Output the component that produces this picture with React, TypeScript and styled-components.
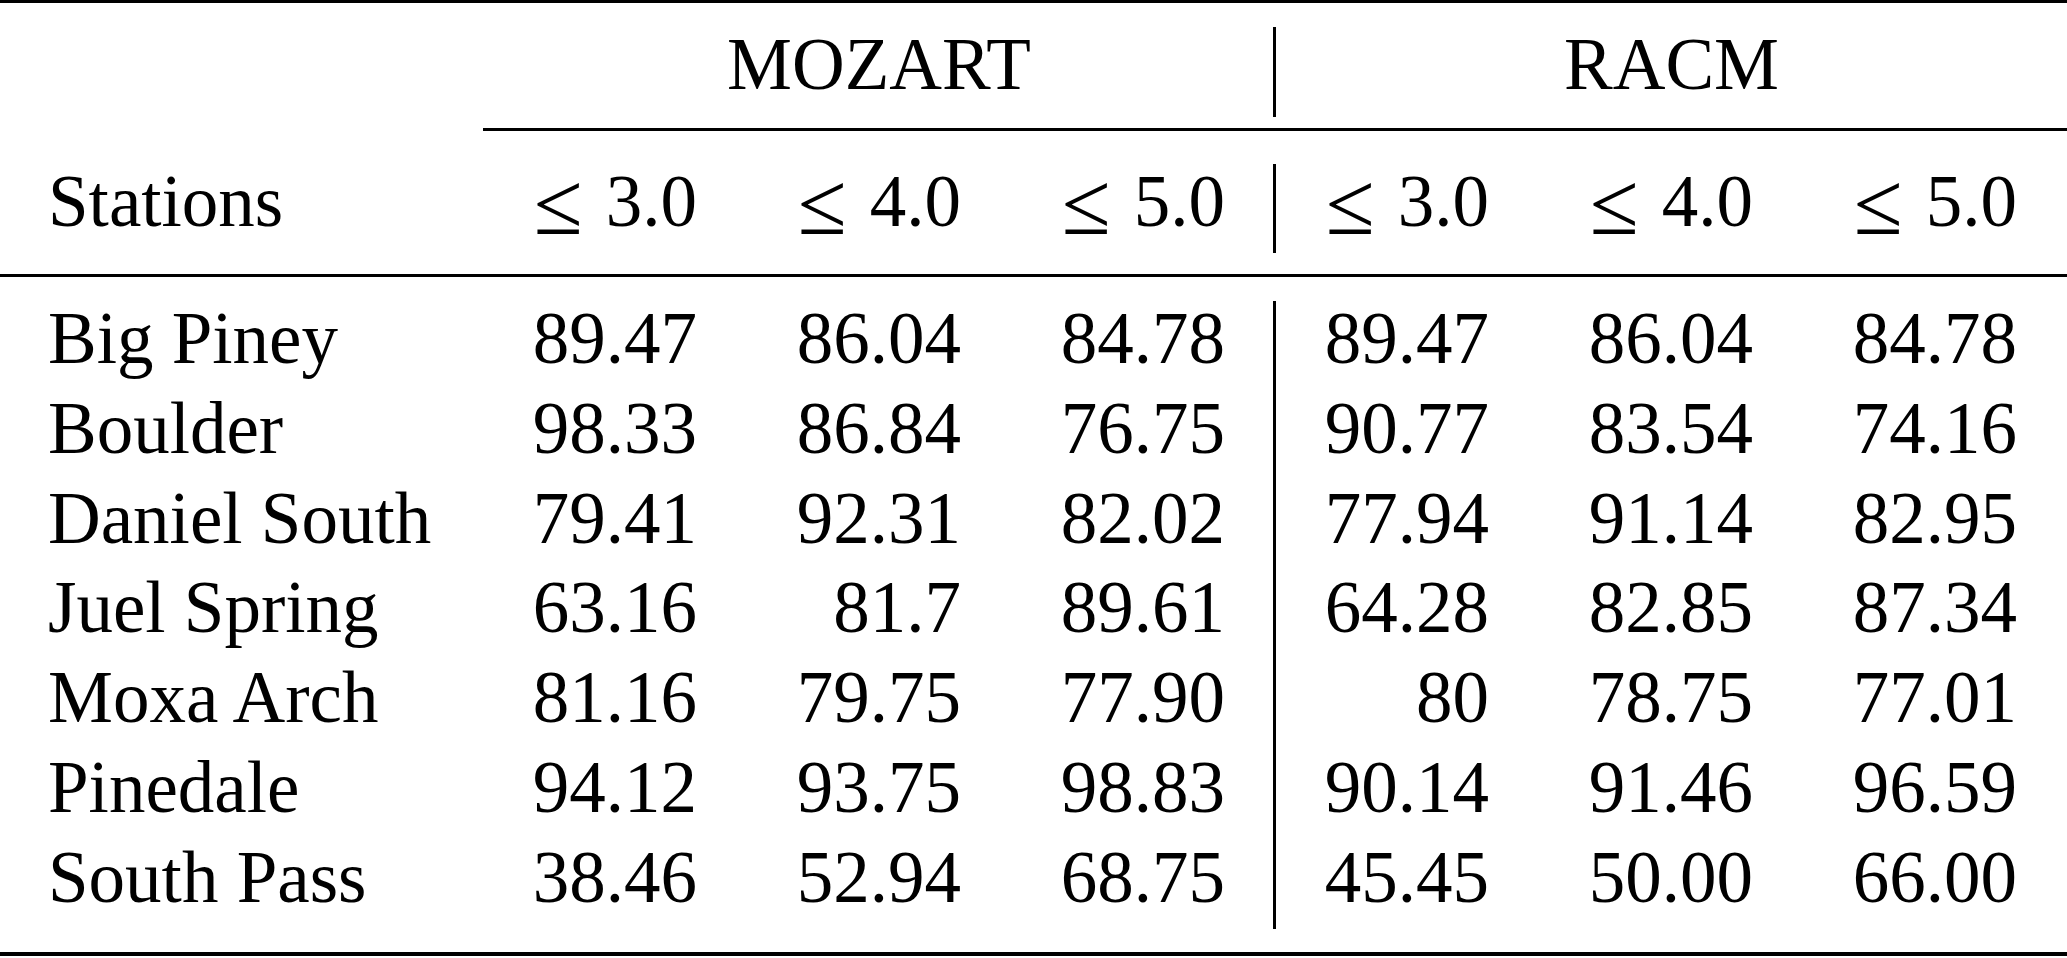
import * as React from 'react';
import styled, { createGlobalStyle } from 'styled-components';

const GlobalStyle = createGlobalStyle`
	html, body {
		margin: 0;
		padding: 0;
		background: #ffffff;
	}
	body {
		font-family: 'Liberation Serif', 'Times New Roman', serif;
		color: #000000;
	}
`;

const COLS = '483px repeat(6, 264px)';

const Table = styled.div`
	width: 2067px;
	display: flex;
	flex-direction: column;
	font-size: 73px;
`;

const Rule = styled.div<{ $thick?: number; $before?: number; $after: number; $indent?: number }>`
	height: ${p => p.$thick ?? 3}px;
	margin-left: ${p => p.$indent ?? 0}px;
	margin-top: ${p => p.$before ?? 0}px;
	margin-bottom: ${p => p.$after}px;
	background: #000000;
`;

const Row = styled.div`
	display: grid;
	grid-template-columns: ${COLS};
	line-height: 76px;
	white-space: nowrap;
`;

const Cell = styled.div<{ $divider?: boolean; $span?: number; $align?: 'left' | 'right' | 'center' }>`
	grid-column: span ${p => p.$span ?? 1};
	text-align: ${p => p.$align ?? 'right'};
	padding-bottom: 13.7px;
	padding-left: ${p => (p.$align === 'left' ? '48px' : '0')};
	padding-right: ${p => (p.$align === 'right' || !p.$align ? '50px' : '0')};
	${p =>
		p.$divider &&
		`
		border-left: 3px solid #000000;
		margin-left: -2px;
	`}
`;

// math-style "less or equal" sign, a bit larger than the text glyph
const Leq = styled.span`
	display: inline-block;
	font-size: 1.22em;
	line-height: 0;
	vertical-align: -0.09em;
	margin-right: 0.26em;
`;

const Body = styled.div`
	display: flex;
	flex-direction: column;
`;

type Station = { name: string; mozart: string[]; racm: string[] };

const stations: Station[] = [
	{ name: 'Big Piney', mozart: ['89.47', '86.04', '84.78'], racm: ['89.47', '86.04', '84.78'] },
	{ name: 'Boulder', mozart: ['98.33', '86.84', '76.75'], racm: ['90.77', '83.54', '74.16'] },
	{ name: 'Daniel South', mozart: ['79.41', '92.31', '82.02'], racm: ['77.94', '91.14', '82.95'] },
	{ name: 'Juel Spring', mozart: ['63.16', '81.7', '89.61'], racm: ['64.28', '82.85', '87.34'] },
	{ name: 'Moxa Arch', mozart: ['81.16', '79.75', '77.90'], racm: ['80', '78.75', '77.01'] },
	{ name: 'Pinedale', mozart: ['94.12', '93.75', '98.83'], racm: ['90.14', '91.46', '96.59'] },
	{ name: 'South Pass', mozart: ['38.46', '52.94', '68.75'], racm: ['45.45', '50.00', '66.00'] }
];

const thresholds = ['3.0', '4.0', '5.0'];

export default function App() {
	return (
		<>
			<GlobalStyle />
			<Table>
				<Rule $thick={3} $after={24} />
				<Row>
					<Cell $align="left" />
					<Cell $span={3} $align="center">MOZART</Cell>
					<Cell $span={3} $align="center" $divider>
						RACM
					</Cell>
				</Row>
				<Rule $before={11} $after={33} $indent={483} />
				<Row>
					<Cell $align="left">Stations</Cell>
					{[...thresholds, ...thresholds].map((t, i) => (
						<Cell key={i} $divider={i === 3}>
							<Leq>≤</Leq>
							{t}
						</Cell>
					))}
				</Row>
				<Rule $before={21} $after={24} />
				<Body>
					{stations.map(s => (
						<Row key={s.name}>
							<Cell $align="left">{s.name}</Cell>
							{s.mozart.map((v, i) => (
								<Cell key={`m${i}`}>{v}</Cell>
							))}
							{s.racm.map((v, i) => (
								<Cell key={`r${i}`} $divider={i === 0}>
									{v}
								</Cell>
							))}
						</Row>
					))}
				</Body>
				<Rule $thick={4} $before={23} $after={0} />
			</Table>
		</>
	);
}
